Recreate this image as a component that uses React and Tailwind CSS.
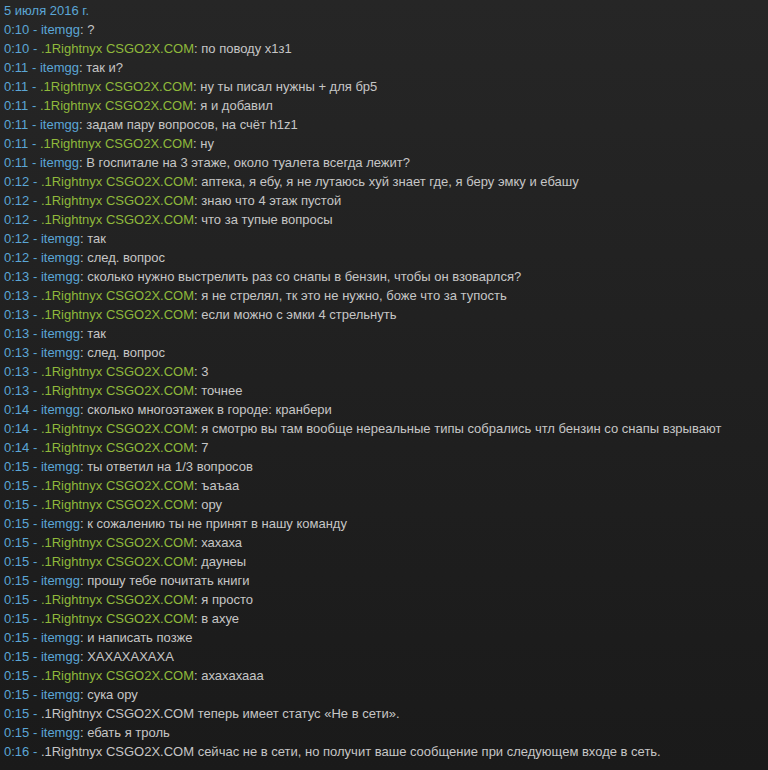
const I = "itemgg";
const R = ".1Rightnyx CSGO2X.COM";

const lines = [
  ["0:10", I, "?"],
  ["0:10", R, "по поводу х1з1"],
  ["0:11", I, "так и?"],
  ["0:11", R, "ну ты писал нужны + для бр5"],
  ["0:11", R, "я и добавил"],
  ["0:11", I, "задам пару вопросов, на счёт h1z1"],
  ["0:11", R, "ну"],
  ["0:11", I, "В госпитале на 3 этаже, около туалета всегда лежит?"],
  ["0:12", R, "аптека, я ебу, я не лутаюсь хуй знает где, я беру эмку и ебашу"],
  ["0:12", R, "знаю что 4 этаж пустой"],
  ["0:12", R, "что за тупые вопросы"],
  ["0:12", I, "так"],
  ["0:12", I, "след. вопрос"],
  ["0:13", I, "сколько нужно выстрелить раз со снапы в бензин, чтобы он взоварлся?"],
  ["0:13", R, "я не стрелял, тк это не нужно, боже что за тупость"],
  ["0:13", R, "если можно с эмки 4 стрельнуть"],
  ["0:13", I, "так"],
  ["0:13", I, "след. вопрос"],
  ["0:13", R, "3"],
  ["0:13", R, "точнее"],
  ["0:14", I, "сколько многоэтажек в городе: кранбери"],
  ["0:14", R, "я смотрю вы там вообще нереальные типы собрались чтл бензин со снапы взрывают"],
  ["0:14", R, "7"],
  ["0:15", I, "ты ответил на 1/3 вопросов"],
  ["0:15", R, "ъаъаа"],
  ["0:15", R, "ору"],
  ["0:15", I, "к сожалению ты не принят в нашу команду"],
  ["0:15", R, "хахаха"],
  ["0:15", R, "даунеы"],
  ["0:15", I, "прошу тебе почитать книги"],
  ["0:15", R, "я просто"],
  ["0:15", R, "в ахуе"],
  ["0:15", I, "и написать позже"],
  ["0:15", I, "ХАХАХАХАХА"],
  ["0:15", R, "ахахахааа"],
  ["0:15", I, "сука ору"],
  ["0:15", null, ".1Rightnyx CSGO2X.COM теперь имеет статус «Не в сети»."],
  ["0:15", I, "ебать я троль"],
  ["0:16", null, ".1Rightnyx CSGO2X.COM сейчас не в сети, но получит ваше сообщение при следующем входе в сеть."],
];

export default function App() {
  return (
    <div
      className="w-[768px] h-[770px] overflow-hidden bg-gradient-to-b from-[#262626] to-[#1a1a1a] pl-[4px] pt-[1px] text-[13px] leading-[19px] text-[#c6c6c6]"
      style={{ fontFamily: '"Liberation Sans", Arial, sans-serif' }}
    >
      <div className="text-[#5ba6d6]">5 июля 2016 г.</div>
      {lines.map(([t, who, msg], i) => (
        <div key={i} className="whitespace-nowrap">
          <span className="text-[#5ba6d6]">{t} - </span>
          {who ? (
            <>
              <span className={who === I ? "text-[#5ba6d6]" : "text-[#8fb93b]"}>{who}</span>
              <span>: {msg}</span>
            </>
          ) : (
            <span>{msg}</span>
          )}
        </div>
      ))}
    </div>
  );
}
